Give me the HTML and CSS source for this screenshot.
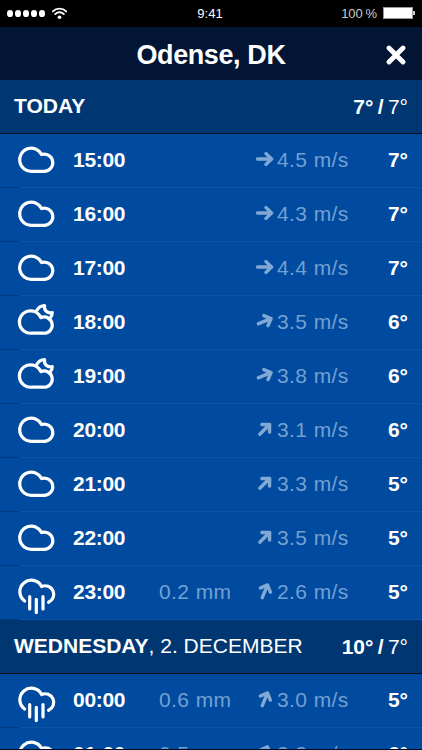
FILE: index.html
```html
<!DOCTYPE html>
<html lang="en">
<head>
  <meta charset="UTF-8">
  <meta name="viewport" content="width=device-width, initial-scale=1">
  <title>Odense, DK</title>
  <link rel="stylesheet" href="styles.css">
</head>
<body>

  <!-- icons -->
  <svg class="sprite">
    <symbol id="cloud" viewBox="0 0 40 40">
      <path d="M15 31.3A11.6 11.6 0 1 1 24.6 14.5A8.6 8.6 0 1 1 27 31.3Z"/>
    </symbol>
    <symbol id="cloud-moon" viewBox="0 0 40 40">
      <path d="M14.6 31.2A11.2 11.2 0 1 1 23.9 15.7A8.1 8.1 0 1 1 26.5 31.2Z"/>
      <path d="M19.5 8.8C21.3 5.5 24.3 3.6 27.6 3.6C26.6 8.2 30.4 11.8 35.3 10.6C35.3 12.8 34.6 14.4 33.2 15.8"/>
    </symbol>
    <symbol id="rain" viewBox="0 0 40 40">
      <path d="M7.6 29A11.5 11.5 0 1 1 24.6 14.5A8.6 8.6 0 0 1 31.6 30.3"/>
      <path d="M12.7 24.6v12.4M19.3 27.4v13.2M26 24.6v12.4"/>
    </symbol>
    <symbol id="arrow" viewBox="0 0 18 18">
      <path d="M1.6 9h13.5M10 3.6L15.6 9L10 14.4"/>
    </symbol>
  </svg>

  <div class="status">
    <div class="signal">
      <i></i><i></i><i></i><i></i><i></i>
      <svg class="wifi" viewBox="0 0 14 12">
        <path d="M.8 4a8.8 8.8 0 0 1 12.4 0M3 6.5a5.7 5.7 0 0 1 8 0"/>
        <circle cx="7" cy="9.5" r="1.7"/>
      </svg>
    </div>
    <div class="clock">9:41</div>
    <div class="power">100&thinsp;% <span class="battery"></span></div>
  </div>

  <header class="title-bar">
    <h1>Odense, DK</h1>
    <button class="close" aria-label="Close">
      <svg viewBox="0 0 20 20"><path d="M3 3l14 14M17 3L3 17"/></svg>
    </button>
  </header>

  <main class="forecast">
    <h2 class="day"><span><b>TODAY</b></span><span class="range"><b>7° /</b> 7°</span></h2>
    <div class="hour">
      <svg class="icon"><use href="#cloud"/></svg><b class="time">15:00</b><span class="rain"></span>
      <svg class="arrow"><use href="#arrow"/></svg><span class="wind">4.5 m/s</span><b class="temp">7°</b>
    </div>
    <div class="hour">
      <svg class="icon"><use href="#cloud"/></svg><b class="time">16:00</b><span class="rain"></span>
      <svg class="arrow"><use href="#arrow"/></svg><span class="wind">4.3 m/s</span><b class="temp">7°</b>
    </div>
    <div class="hour">
      <svg class="icon"><use href="#cloud"/></svg><b class="time">17:00</b><span class="rain"></span>
      <svg class="arrow"><use href="#arrow"/></svg><span class="wind">4.4 m/s</span><b class="temp">7°</b>
    </div>
    <div class="hour">
      <svg class="icon"><use href="#cloud-moon"/></svg><b class="time">18:00</b><span class="rain"></span>
      <svg class="arrow ene"><use href="#arrow"/></svg><span class="wind">3.5 m/s</span><b class="temp">6°</b>
    </div>
    <div class="hour">
      <svg class="icon"><use href="#cloud-moon"/></svg><b class="time">19:00</b><span class="rain"></span>
      <svg class="arrow ene"><use href="#arrow"/></svg><span class="wind">3.8 m/s</span><b class="temp">6°</b>
    </div>
    <div class="hour">
      <svg class="icon"><use href="#cloud"/></svg><b class="time">20:00</b><span class="rain"></span>
      <svg class="arrow ne"><use href="#arrow"/></svg><span class="wind">3.1 m/s</span><b class="temp">6°</b>
    </div>
    <div class="hour">
      <svg class="icon"><use href="#cloud"/></svg><b class="time">21:00</b><span class="rain"></span>
      <svg class="arrow ne"><use href="#arrow"/></svg><span class="wind">3.3 m/s</span><b class="temp">5°</b>
    </div>
    <div class="hour">
      <svg class="icon"><use href="#cloud"/></svg><b class="time">22:00</b><span class="rain"></span>
      <svg class="arrow ne"><use href="#arrow"/></svg><span class="wind">3.5 m/s</span><b class="temp">5°</b>
    </div>
    <div class="hour">
      <svg class="icon"><use href="#rain"/></svg><b class="time">23:00</b><span class="rain">0.2 mm</span>
      <svg class="arrow nne"><use href="#arrow"/></svg><span class="wind">2.6 m/s</span><b class="temp">5°</b>
    </div>

    <h2 class="day"><span><b>WEDNESDAY</b>, 2. DECEMBER</span><span class="range"><b>10° /</b> 7°</span></h2>
    <div class="hour">
      <svg class="icon"><use href="#rain"/></svg><b class="time">00:00</b><span class="rain">0.6 mm</span>
      <svg class="arrow nne"><use href="#arrow"/></svg><span class="wind">3.0 m/s</span><b class="temp">5°</b>
    </div>
    <div class="hour">
      <svg class="icon"><use href="#rain"/></svg><b class="time">01:00</b><span class="rain">0.5 mm</span>
      <svg class="arrow nne"><use href="#arrow"/></svg><span class="wind">3.3 m/s</span><b class="temp">6°</b>
    </div>
  </main>

</body>
</html>
```

FILE: styles.css
```css
* {
  margin: 0;
  padding: 0;
  box-sizing: border-box;
}

body {
  height: 750px;
  overflow: hidden;
  display: flex;
  flex-direction: column;
  background: #004b9f;
  color: #fff;
  font-family: "Liberation Sans", Arial, sans-serif;
  font-size: 21px;
}

svg {
  fill: none;
  stroke: currentColor;
  stroke-linecap: round;
  stroke-linejoin: round;
}

.sprite {
  display: none;
}

symbol {
  overflow: visible;
}

/* status bar */
.status {
  flex: none;
  height: 27px;
  padding: 0 6px 1px 7px;
  display: grid;
  grid-template-columns: 1fr auto 1fr;
  align-items: center;
  background: #000;
  font-size: 13px;
}

.signal {
  display: flex;
  align-items: center;
  gap: 1.6px;
}

.signal i {
  width: 6.3px;
  height: 7px;
  border-radius: 50%;
  background: #fff;
}

.wifi {
  width: 15px;
  height: 13px;
  margin-left: 6px;
  stroke-width: 1.7;
}

.wifi circle {
  fill: #fff;
  stroke: none;
}

.clock {
  margin-right: 3px;
}

.power {
  display: flex;
  align-items: center;
  justify-content: flex-end;
  gap: 6px;
  color: #ccc;
}

.battery {
  position: relative;
  width: 30px;
  height: 12px;
  margin-right: 3px;
  border: 1px solid #999;
  background: #fff;
}

.battery::after {
  content: "";
  position: absolute;
  left: 29px;
  top: 3px;
  width: 2px;
  height: 4px;
  background: #ccc;
}

/* title */
.title-bar {
  flex: none;
  height: 53px;
  padding: 3px 16px 0;
  display: grid;
  grid-template-columns: 20px 1fr 20px;
  align-items: center;
  background: #021535;
}

.title-bar h1 {
  grid-column: 2;
  text-align: center;
  font-size: 27px;
  letter-spacing: -0.4px;
}

.close {
  width: 20px;
  height: 20px;
  border: none;
  background: none;
  color: #fff;
}

.close svg {
  display: block;
  stroke-width: 4.8;
}

/* list */
.forecast {
  flex: 1;
  overflow: hidden;
  border-bottom: 1px solid #000d20;
}

.day {
  height: 54px;
  padding: 0 14px 1px;
  display: flex;
  align-items: center;
  justify-content: space-between;
  background: #003773;
  border-bottom: 1px solid #000d20;
  font-size: 21px;
  font-weight: normal;
}

.range {
  padding-top: 2px;
  word-spacing: -1.5px;
}

.hour {
  height: 54px;
  padding: 0 14px 2px 17px;
  display: grid;
  grid-template-columns: 56px 86px 97px 21px 1fr auto;
  align-items: center;
  background:
    linear-gradient(#003b80, #003b80) 0 100% / 20px 1px no-repeat,
    linear-gradient(#0a55a8, #0a55a8) 20px 100% / 100% 1px no-repeat,
    #004b9f;
}

.icon {
  width: 40px;
  height: 40px;
  overflow: visible;
  stroke-width: 3.2;
}

.time,
.rain,
.wind,
.temp {
  line-height: 24px;
}

.time {
  letter-spacing: -0.3px;
}

.rain,
.wind {
  color: #73a0d2;
  letter-spacing: 0.4px;
}

.arrow {
  width: 18px;
  height: 18px;
  margin-bottom: 2px;
  color: #80a9d6;
  stroke-width: 3.4;
}

.ene {
  transform: rotate(-22.5deg);
}

.ne {
  transform: rotate(-45deg);
}

.nne {
  transform: rotate(-67.5deg);
}
```
